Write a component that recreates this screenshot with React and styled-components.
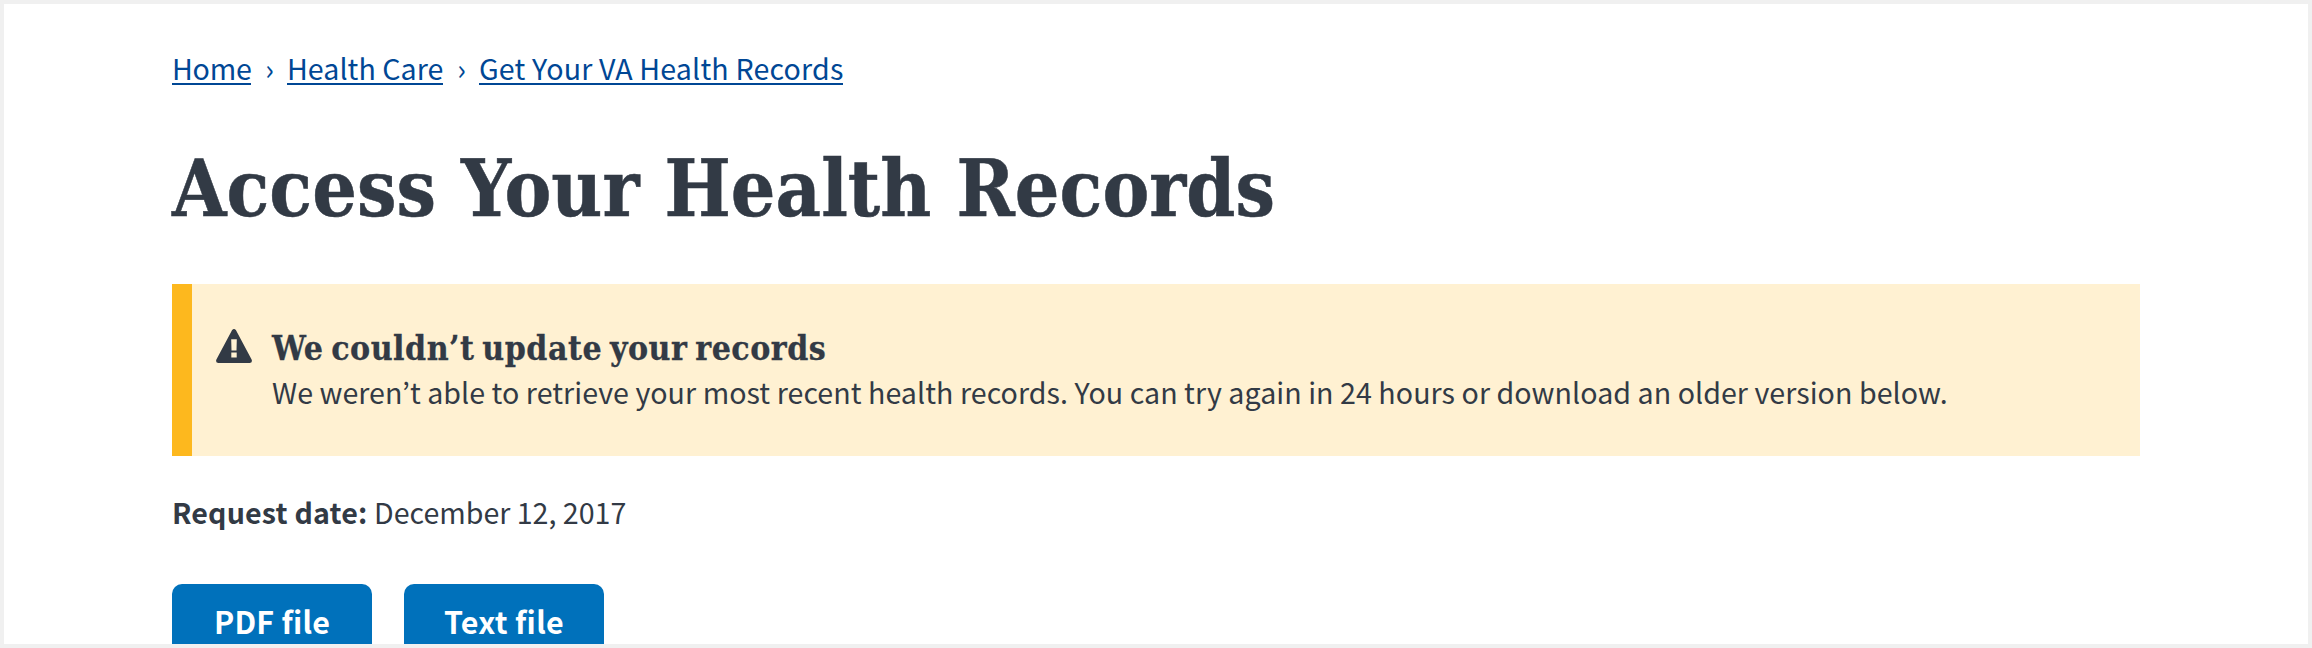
import React from 'react';
import styled, { createGlobalStyle } from 'styled-components';

const sans = '"Noto Sans CJK KR", "Noto Sans", sans-serif';
const slab = '"DejaVu Serif Condensed", "DejaVu Serif", serif';

const GlobalStyle = createGlobalStyle`
  * { box-sizing: border-box; }
  body { margin: 0; background: #fff; }
`;

const Page = styled.main`
  height: 648px;
  overflow: hidden;
  border: 4px solid #f0f0f0;
  padding: 43px 168px 0;
  color: #323a45;
  font: 400 28.6px/40px ${sans};
  white-space: nowrap;
`;

const Breadcrumbs = styled.nav`
  display: flex;
  height: 40px;
  line-height: 42px;
`;

const Crumb = styled.a`
  height: 38px;
  width: ${p => p.$width}px;
  border-bottom: 2px solid #004795;
  color: #004795;
  letter-spacing: ${p => p.$spacing}px;
`;

const Separator = styled.span`
  width: 36px;
  padding-left: 1px;
  text-align: center;
  color: #004795;
`;

const Title = styled.h1`
  margin: 62px 0 0;
  height: 80px;
  font: 700 78px/80px ${slab};
  letter-spacing: 0.08px;
  word-spacing: 0.5px;
  -webkit-text-stroke: 0.5px currentColor;
`;

const Alert = styled.section`
  display: flex;
  margin-top: 55px;
  height: 172px;
  border-left: 20px solid #fdb81e;
  background: #fff1d2;
  padding: 42px 24px 0;
`;

const WarningIcon = styled.svg`
  width: 36px;
  height: 34px;
  margin: 3px 20px 0 0;
  flex: none;
  fill: #323a45;
`;

const AlertTitle = styled.h2`
  margin: 0;
  height: 46px;
  font: 700 33.5px/45px ${slab};
  letter-spacing: 0.52px;
  word-spacing: -3.2px;
  -webkit-text-stroke: 0.3px currentColor;
`;

const AlertText = styled.p`
  margin: 0;
  letter-spacing: 0.055px;
`;

const RequestDate = styled.p`
  display: flex;
  gap: 7px;
  margin: 36px 0 0;
  height: 40px;
`;

const DateLabel = styled.strong`
  width: 195px;
  font-weight: 700;
  letter-spacing: 0.17px;
`;

const Actions = styled.div`
  display: flex;
  gap: 32px;
  margin-top: 52px;
`;

const FileButton = styled.button`
  width: 200px;
  height: 88px;
  border: 0;
  border-radius: 10px;
  padding: 0 0 14px;
  background: #0071bb;
  color: #fff;
  font: 700 30.4px/40px ${sans};
  letter-spacing: ${p => p.$spacing}px;
`;

export default function App() {
  return (
    <Page>
      <GlobalStyle />
      <Breadcrumbs>
        <Crumb $width={79} $spacing={-0.2}>Home</Crumb>
        <Separator>›</Separator>
        <Crumb $width={156} $spacing={0.05}>Health Care</Crumb>
        <Separator>›</Separator>
        <Crumb $width={364} $spacing={0.17}>Get Your VA Health Records</Crumb>
      </Breadcrumbs>
      <Title>Access Your Health Records</Title>
      <Alert>
        <WarningIcon viewBox="0 0 36 34" aria-hidden="true">
          <path
            fillRule="evenodd"
            d="M16 1.3 Q18 -1.2 20 1.3 L35.6 30.4 Q36.8 33.8 33.5 34 H2.5 Q-.8 33.8 .4 30.4Z M15.2 10.2 L15.5 21.4 H20.5 L20.8 10.2Z M15.3 23.6 V28.6 H20.7 V23.6Z"
          />
        </WarningIcon>
        <div>
          <AlertTitle>We couldn’t update your records</AlertTitle>
          <AlertText>
            We weren’t able to retrieve your most recent health records. You can try again in 24 hours or download an older version below.
          </AlertText>
        </div>
      </Alert>
      <RequestDate>
        <DateLabel>Request date:</DateLabel>
        <span>December 12, 2017</span>
      </RequestDate>
      <Actions>
        <FileButton $spacing={0.2}>PDF file</FileButton>
        <FileButton $spacing={0.3}>Text file</FileButton>
      </Actions>
    </Page>
  );
}
